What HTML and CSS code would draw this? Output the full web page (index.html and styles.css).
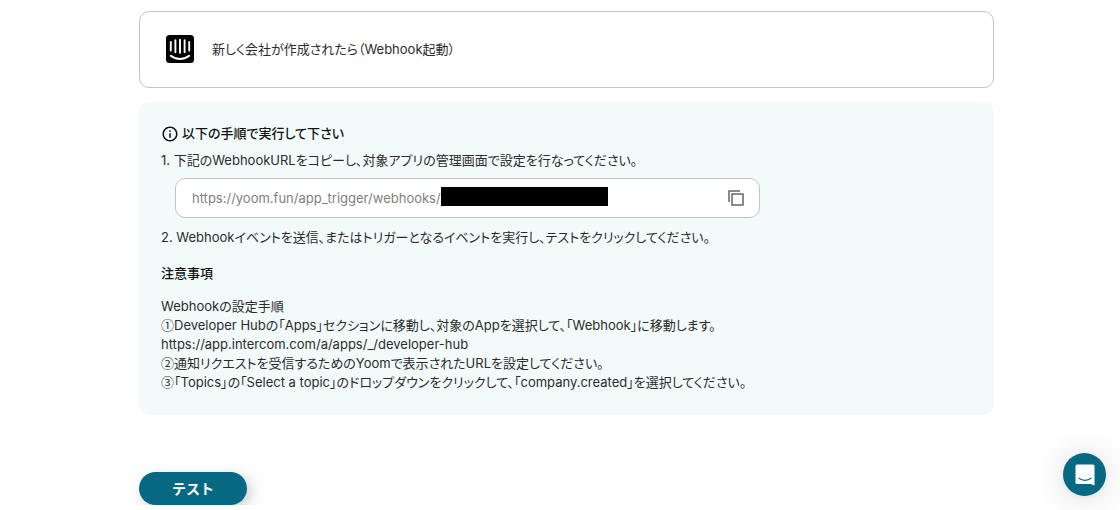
FILE: index.html
```html
<!DOCTYPE html>
<html lang="ja">
<head>
    <meta charset="UTF-8">
    <meta name="viewport" content="width=device-width, initial-scale=1.0">
    <title>Webhook</title>
    <link rel="stylesheet" href="styles.css">
</head>
<body>
    <main class="container">
        <div class="trigger">
            <svg class="app-icon" viewBox="0 0 28 28" aria-hidden="true">
                <rect width="28" height="28" rx="3.5" fill="#000"/>
                <g fill="none" stroke="#fff" stroke-width="1.9" stroke-linecap="round">
                    <path d="M4.800 7v8.500M9.400 5.200v12M14 4.800v13M18.600 5.200v12M23.200 7v8.500"/>
                    <path d="M4.800 20.800c5.200 4.200 13.200 4.200 18.400 0"/>
                </g>
            </svg>
            <span>新しく会社が作成されたら（Webhook起動）</span>
        </div>

        <section class="guide">
            <h2 class="guide-title">
                <svg class="info-icon" viewBox="0 0 24 24" aria-hidden="true">
                    <path fill="currentColor" d="M11 7h2v2h-2zm0 4h2v6h-2zm1-9C6.480 2 2 6.480 2 12s4.480 10 10 10 10-4.480 10-10S17.520 2 12 2zm0 18c-4.410 0-8-3.590-8-8s3.590-8 8-8 8 3.590 8 8-3.590 8-8 8z"/>
                </svg>
                以下の手順で実行して下さい
            </h2>
            <label class="step" for="webhook-url">1. 下記のWebhookURLをコピーし、対象アプリの管理画面で設定を行なってください。</label>
            <div class="url-box">
                <input class="url" id="webhook-url" type="text" value="https://yoom.fun/app_trigger/webhooks/r" readonly>
                <span class="mask"></span>
                <button class="copy" type="button" aria-label="コピー">
                    <svg viewBox="0 0 18 18" aria-hidden="true">
                        <path fill="none" stroke="currentColor" stroke-width="1.500" d="M2 13V2h11M5 5h11v11H5z"/>
                    </svg>
                </button>
            </div>
            <p class="step">2. Webhookイベントを送信、またはトリガーとなるイベントを実行し、テストをクリックしてください。</p>

            <h3 class="note-title">注意事項</h3>
            <p class="note">
                Webhookの設定手順<br>
                <span class="num">①</span>Developer Hubの「Apps」セクションに移動し、対象のAppを選択して、「Webhook」に移動します。<br>
                https://app.intercom.com/a/apps/_/developer-hub<br>
                <span class="num">②</span>通知リクエストを受信するためのYoomで表示されたURLを設定してください。<br>
                <span class="num">③</span>「Topics」の「Select a topic」のドロップダウンをクリックして、「company.created」を選択してください。
            </p>
        </section>

        <button class="test" type="button">テスト</button>
    </main>

    <button class="chat" type="button" aria-label="チャット">
        <svg viewBox="0 0 20 22" aria-hidden="true">
            <path fill="#fff" d="M2 .5h16a1.500 1.500 0 0 1 1.500 1.500v19.500l-4-1.500H2a1.500 1.500 0 0 1-1.500-1.500V2A1.500 1.500 0 0 1 2 .5z"/>
            <path fill="none" stroke="#076883" stroke-width="1.300" stroke-linecap="round" d="M4 14.300c3.500 2.700 8.500 2.700 12 0"/>
        </svg>
    </button>
</body>
</html>
```
FILE: styles.css
```css
* {
    box-sizing: border-box;
}
body {
    margin: 0;
    background-color: #fff;
    color: #2b2b2b;
    font-family: Inter, "Noto Sans CJK JP", sans-serif;
    font-size: 13px;
    line-height: 19px;
    font-feature-settings: "palt";
}
h2, h3, p {
    margin: 0;
    font-size: 13px;
}
button {
    border: none;
    padding: 0;
    font-family: inherit;
    cursor: pointer;
}
.container {
    margin: 11px 126px 0 139px;
}
.trigger {
    display: flex;
    align-items: center;
    gap: 18px;
    padding: 23px 26px 24px;
    border: 1px solid #c4c4c4;
    border-radius: 10px;
}
.app-icon {
    width: 28px;
    height: 28px;
}
.guide {
    margin-top: 14px;
    padding: 22px 22px 23px;
    background-color: #f2fbfa;
    border-radius: 10px;
}
.guide-title {
    display: flex;
    align-items: center;
    gap: 3px;
    margin-bottom: 8px;
    color: #111;
    font-weight: 500;
}
.info-icon {
    width: 18px;
    height: 18px;
}
.step {
    display: block;
}
.url-box {
    position: relative;
    display: flex;
    align-items: center;
    max-width: 585px;
    height: 40px;
    margin: 8px 14px 10px;
    padding: 0 14px 0 16px;
    background-color: #fff;
    border: 1px solid #c4c4c4;
    border-radius: 10px;
}
.url {
    flex: 1;
    min-width: 0;
    padding: 0;
    border: none;
    outline: none;
    color: #808080;
    font: inherit;
}
.mask {
    position: absolute;
    left: 265px;
    top: 8px;
    width: 167px;
    height: 19px;
    background-color: #000;
}
.copy {
    display: flex;
    background: none;
    color: #666;
}
.copy svg {
    width: 18px;
    height: 18px;
}
.note-title {
    margin-top: 17px;
    color: #111;
    font-weight: 500;
}
.note {
    margin-top: 14px;
}
.num {
    font-family: "Noto Sans CJK JP", sans-serif;
    line-height: 1;
}
.test {
    display: block;
    width: 108px;
    height: 33px;
    margin-top: 57px;
    padding-bottom: 2px;
    border-radius: 17px;
    background-color: #076883;
    box-shadow: 4px 4px 14px rgba(30, 60, 90, 0.25);
    color: #fff;
    font-size: 14px;
    font-weight: 700;
}
.chat {
    position: fixed;
    right: 14px;
    bottom: 14px;
    display: flex;
    align-items: center;
    justify-content: center;
    width: 43px;
    height: 43px;
    border-radius: 50%;
    background-color: #076883;
    box-shadow: 0 1px 6px rgba(0, 0, 0, 0.06), 0 2px 32px rgba(0, 0, 0, 0.16);
}
.chat svg {
    width: 20px;
    height: 22px;
}
```
